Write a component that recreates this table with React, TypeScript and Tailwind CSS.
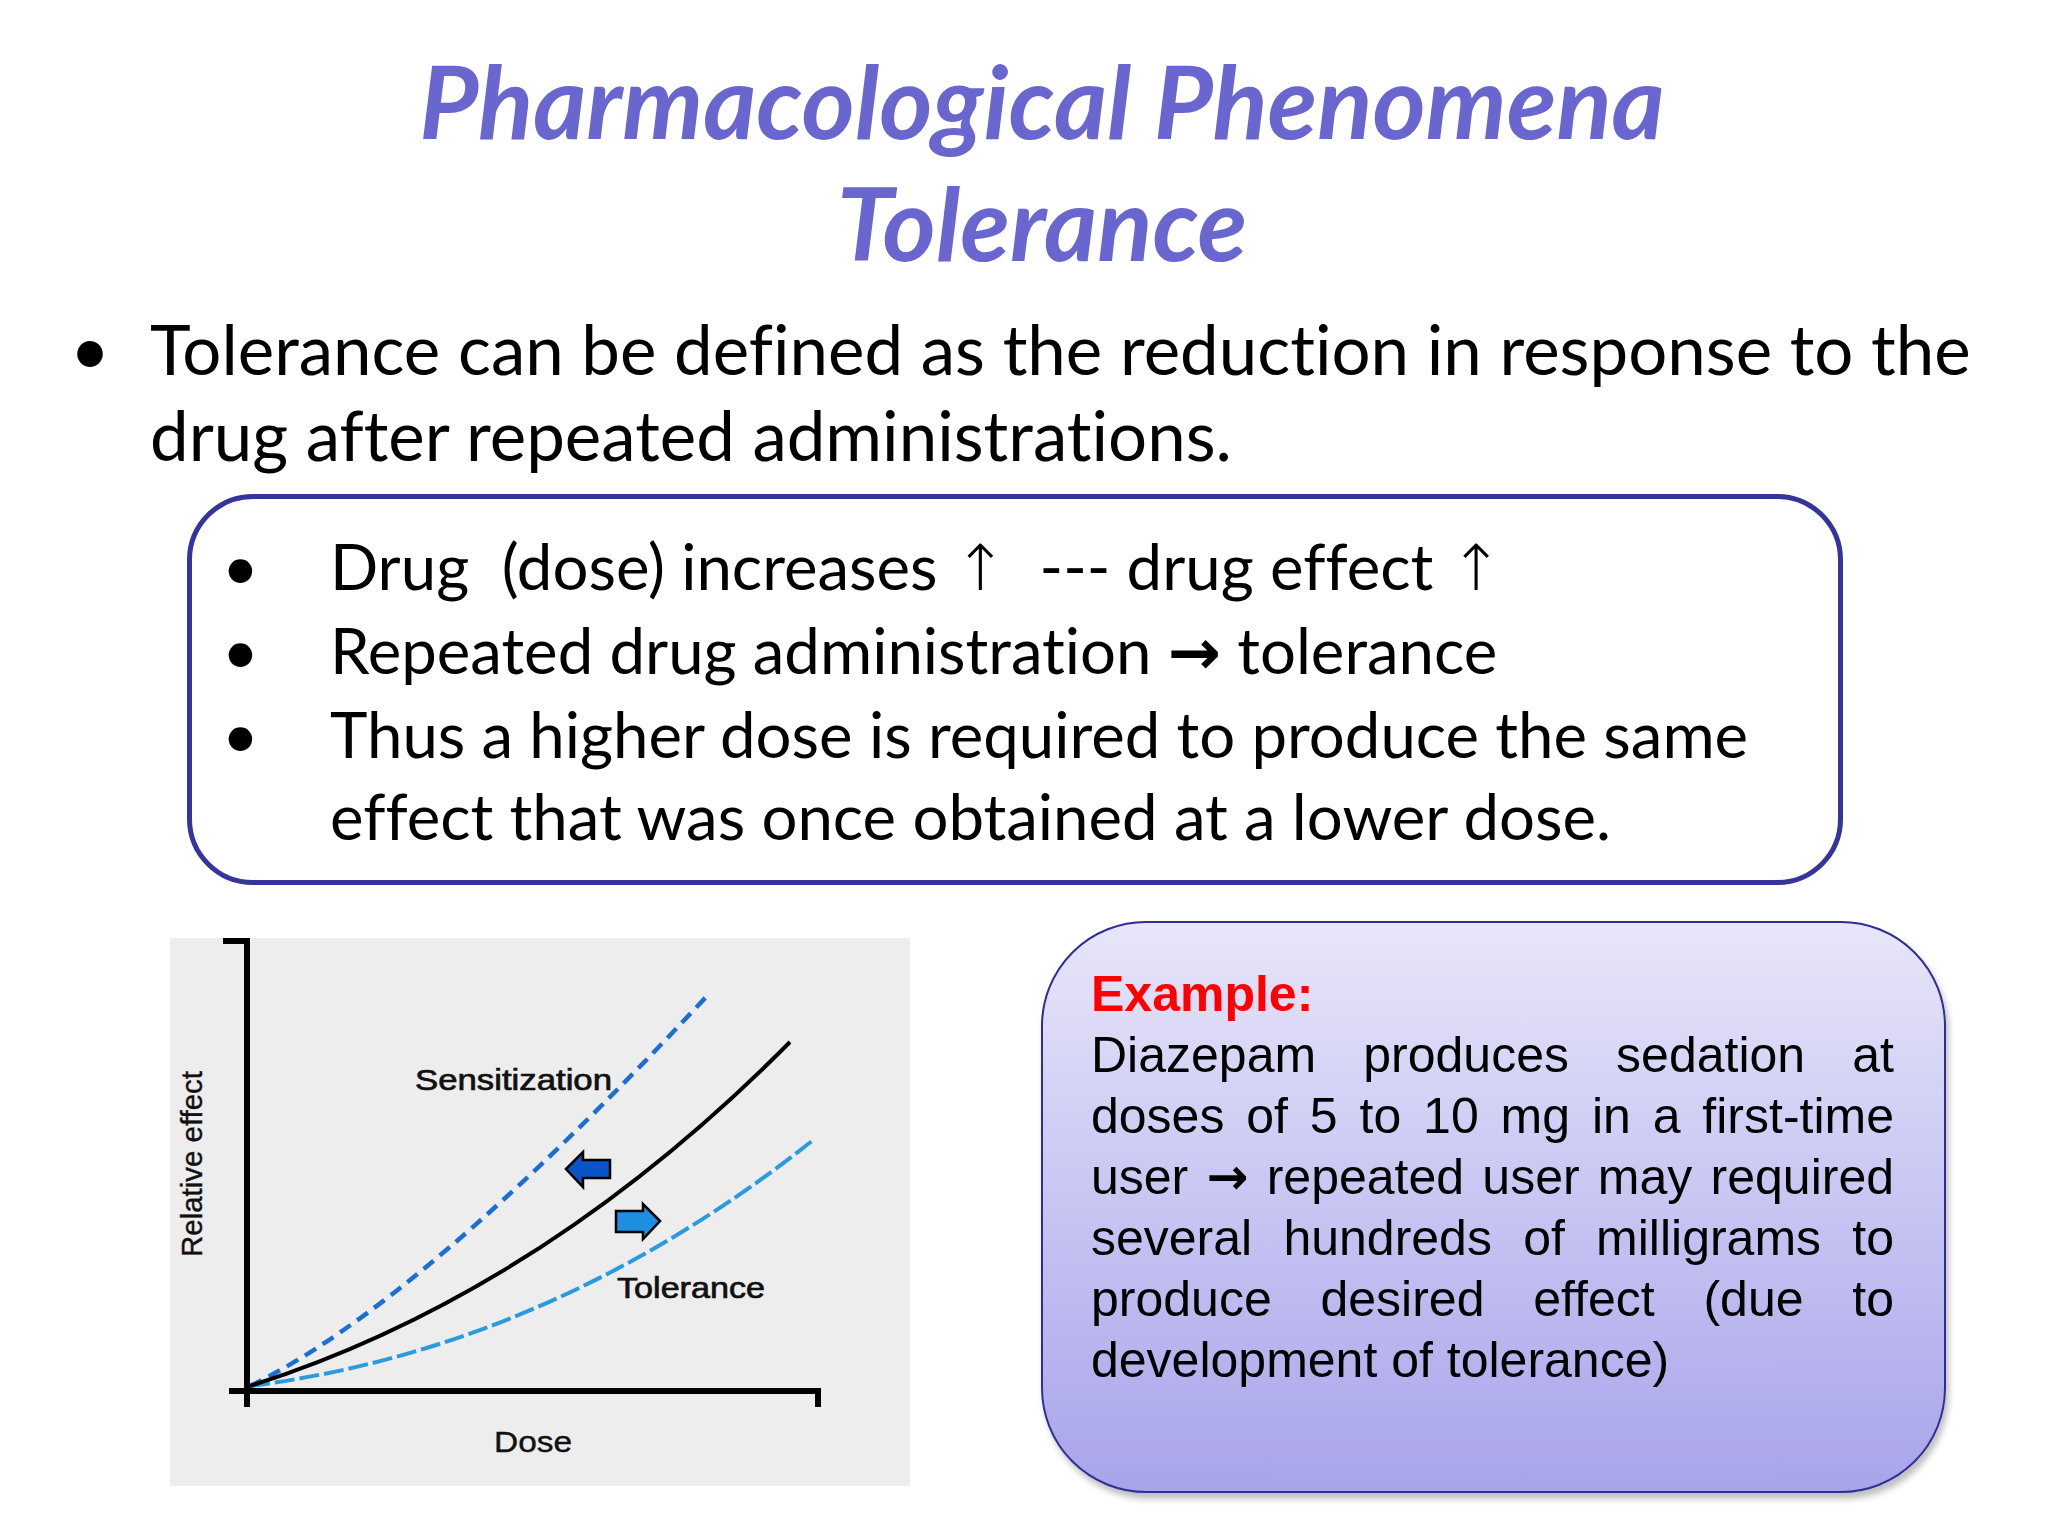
import React from "react";

const SYMBOL = "font-['DejaVu_Sans',sans-serif]";

const BOX_BULLETS: React.ReactNode[] = [
  <>
    Drug{"\u00a0\u00a0"}(dose) increases <span className={`${SYMBOL} font-light`}>↑</span>
    {"\u00a0\u00a0"}--- drug effect <span className={`${SYMBOL} font-light`}>↑</span>
  </>,
  <>
    Repeated drug administration <span className={`${SYMBOL} font-bold`}>→</span> tolerance
  </>,
  <>Thus a higher dose is required to produce the same effect that was once obtained at a lower dose.</>,
];

function DoseChart() {
  return (
    <svg viewBox="0 0 740 548" className="h-[548px] w-[740px]">
      <rect x="0" y="0" width="740" height="548" fill="#ededed" />
      {/* axes */}
      <g stroke="#000" strokeWidth="6" fill="none" strokeLinecap="square">
        <line x1="77" y1="3" x2="77" y2="466" />
        <line x1="56" y1="3" x2="77" y2="3" />
        <line x1="62" y1="453" x2="648" y2="453" />
        <line x1="648" y1="453" x2="648" y2="466" />
      </g>
      {/* curves */}
      <path d="M80 448 Q250 366 536 59" stroke="#1a6fd4" strokeWidth="4.5" fill="none" strokeDasharray="13 8" />
      <path d="M80 448 Q380 410 642 203" stroke="#2b9be0" strokeWidth="4" fill="none" strokeDasharray="20 5" />
      <path d="M80 448 Q370 356 620 104" stroke="#000" strokeWidth="4" fill="none" />
      {/* arrows */}
      <path
        d="M396 231 L413 214 L413 222 L440 222 L440 240 L413 240 L413 249 Z"
        fill="#0b54c8"
        stroke="#000"
        strokeWidth="2.5"
      />
      <path
        d="M490 283 L473 266 L473 273 L446 273 L446 294 L473 294 L473 301 Z"
        fill="#1c8fe0"
        stroke="#000"
        strokeWidth="2.5"
      />
      <g fontFamily="'Liberation Sans', Arial, sans-serif" fill="#111">
        <text
          x="245"
          y="152"
          fontSize="29"
          stroke="#111"
          strokeWidth="0.7"
          textLength="197"
          lengthAdjust="spacingAndGlyphs"
        >
          Sensitization
        </text>
        <text
          x="447"
          y="360"
          fontSize="29"
          stroke="#111"
          strokeWidth="0.7"
          textLength="148"
          lengthAdjust="spacingAndGlyphs"
        >
          Tolerance
        </text>
        <text x="324" y="514" fontSize="29" stroke="#111" strokeWidth="0.4" textLength="78" lengthAdjust="spacingAndGlyphs">
          Dose
        </text>
        <text
          x="0"
          y="0"
          fontSize="30"
          stroke="#111"
          strokeWidth="0.4"
          textLength="186"
          lengthAdjust="spacingAndGlyphs"
          transform="translate(32 319) rotate(-90)"
        >
          Relative effect
        </text>
      </g>
    </svg>
  );
}

export default function App() {
  return (
    <div className="h-[1536px] w-[2048px] overflow-hidden bg-white font-['Lato','Open_Sans',sans-serif] text-black [font-variant-ligatures:none]">
      <header className="pl-[36px] pt-[39px] text-center text-[102px] font-bold italic leading-[122px] text-[#6a66cf]">
        <h1>Pharmacological Phenomena</h1>
        <h1>Tolerance</h1>
      </header>

      <div className="mt-[23px] flex pl-[70px] pr-[40px] text-[69px] leading-[86px]">
        <span className="w-[80px] shrink-0">•</span>
        <p>Tolerance can be defined as the reduction in response to the drug after repeated administrations.</p>
      </div>

      <section className="ml-[187px] mt-[16px] h-[391px] w-[1656px] rounded-[66px] border-[5px] border-[#34349c] pl-[30px] pr-[40px] pt-[26px] text-[63.5px] leading-[82px]">
        {BOX_BULLETS.map((b, i) => (
          <div key={i} className="flex">
            <span className="w-[108px] shrink-0">•</span>
            <p>{b}</p>
          </div>
        ))}
      </section>

      <div className="mt-[36px] flex items-start">
        <div className="ml-[170px] mt-[17px]">
          <DoseChart />
        </div>
        <div className="ml-[131px] h-[572px] w-[905px] rounded-[105px] border-2 border-[#2e2e96] bg-gradient-to-b from-[#e8e6f9] to-[#a8a4ea] pl-[48px] pr-[50px] pt-[41px] font-['Liberation_Sans',Arial,sans-serif] text-[50px] leading-[61px] shadow-[3px_6px_6px_rgba(0,0,0,0.25)]">
          <p className="font-bold text-[#ff0000]">Example:</p>
          <p className="text-justify">
            Diazepam produces sedation at doses of 5 to 10 mg in a first-time user{" "}
            <span className={`${SYMBOL} font-bold`}>→</span> repeated user may required several hundreds of
            milligrams to produce desired effect (due to development of tolerance)
          </p>
        </div>
      </div>
    </div>
  );
}
